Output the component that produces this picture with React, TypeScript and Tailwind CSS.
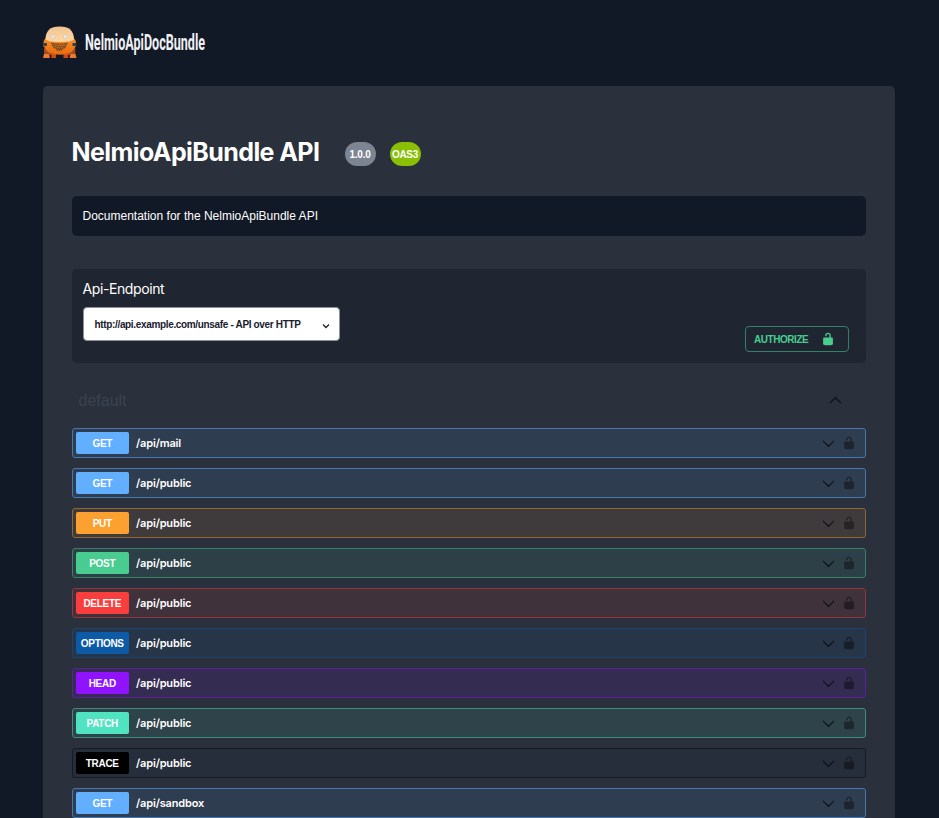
type Row = { method: string; path: string; box: string; badge: string };

const get = { box: 'bg-[#2f3d50] border-[#4577b0]', badge: 'bg-[#61affe]' };

const rows: Row[] = [
  { method: 'GET', path: '/api/mail', ...get },
  { method: 'GET', path: '/api/public', ...get },
  { method: 'PUT', path: '/api/public', box: 'bg-[#3f3b3d] border-[#936635]', badge: 'bg-[#fca130]' },
  { method: 'POST', path: '/api/public', box: 'bg-[#2d4047] border-[#398068]', badge: 'bg-[#49cc90]' },
  { method: 'DELETE', path: '/api/public', box: 'bg-[#3f323b] border-[#94363d]', badge: 'bg-[#f93e3e]' },
  { method: 'OPTIONS', path: '/api/public', box: 'bg-[#263548] border-[#1b4472]', badge: 'bg-[#0d5aa7]' },
  { method: 'HEAD', path: '/api/public', box: 'bg-[#352d51] border-[#5c1f9e]', badge: 'bg-[#9012fe]' },
  { method: 'PATCH', path: '/api/public', box: 'bg-[#2e434a] border-[#3d8d80]', badge: 'bg-[#50e3c2]' },
  { method: 'TRACE', path: '/api/public', box: 'bg-[#272e3b] border-[#171b23]', badge: 'bg-black' },
  { method: 'GET', path: '/api/sandbox', ...get },
];

function Lock({ className }: { className: string }) {
  return (
    <svg viewBox="0 0 20 20" fill="currentColor" className={className}>
      <path d="M15.8 8H14V5.6C14 2.703 12.665 1 10 1 7.334 1 6 2.703 6 5.6V6h2v-.801C8 3.754 8.797 3 10 3c1.203 0 2 .754 2 2.199V8H4c-.553 0-1 .646-1 1.199V17c0 .549.428 1.139.951 1.307l1.197.387C5.672 18.861 6.55 19 7.1 19h5.8c.549 0 1.428-.139 1.951-.307l1.196-.387c.524-.167.953-.757.953-1.306V9.199C17 8.646 16.352 8 15.8 8z" />
    </svg>
  );
}

function Arrow({ className }: { className: string }) {
  return (
    <svg viewBox="0 0 20 20" fill="currentColor" stroke="currentColor" strokeWidth=".4" className={className}>
      <path d="M17.418 6.109c.272-.268.709-.268.979 0s.271.701 0 .969l-7.908 7.83c-.27.268-.707.268-.979 0l-7.908-7.83c-.27-.268-.27-.701 0-.969.271-.268.709-.268.979 0L10 13.25l7.418-7.141z" />
    </svg>
  );
}

function Logo() {
  return (
    <svg width="300" height="44" viewBox="0 0 300 44" className="block">
      <defs>
        <linearGradient id="dome" x1="0" y1="0" x2="0" y2="1">
          <stop offset="0" stopColor="#efc491" />
          <stop offset="1" stopColor="#ffd7a2" />
        </linearGradient>
        <linearGradient id="body" x1="0" y1="0" x2="0" y2="1">
          <stop offset="0" stopColor="#f7922c" />
          <stop offset="1" stopColor="#e8690f" />
        </linearGradient>
      </defs>
      <path d="M3 12Q-.3 14 .3 20.500L4 23zM30.500 12Q33.800 14 33 20.500L29.500 23z" fill="#c47342" />
      <path d="M1 22.500Q3 20.500 6 24L9 27.500 8.500 29H1V27zM32.300 22.500Q30.300 20.500 27.300 24L24.300 27.500 24.800 29h7.500V27z" fill="#a8481c" />
      <path d="M8 28h5v4H8.500zM20.500 28h5l-.5 4h-4.500z" fill="#cf4918" />
      <path d="M1 28h5l1 4H0zM27.500 28h5l1 4h-7z" fill="#ec7b2d" />
      <path d="M1 16Q1.500 13 3.500 12.500H30Q32 13 32.500 16 33 22 28.500 26 24.500 28.800 17 28.800 9 28.800 5 26 .5 22 1 16z" fill="url(#body)" />
      <path d="M.3 17h3.500v3H.5zM29.500 17h3.500v3h-3.500z" fill="#353a46" />
      <path d="M2.500 13.500C2.500 5 7 .5 16.700.5S31 5 31 13.500Q28 16 16.700 16T2.500 13.500z" fill="url(#dome)" />
      <circle cx="10" cy="10.800" r="2" fill="#fffdf6" stroke="#c9c3b8" strokeWidth=".8" />
      <circle cx="22.400" cy="10.800" r="2" fill="#fffdf6" stroke="#c9c3b8" strokeWidth=".8" />
      <circle cx="10" cy="10.800" r=".6" fill="#a29a8e" />
      <circle cx="22.400" cy="10.800" r=".6" fill="#a29a8e" />
      <path d="M8 17.200Q16.500 19.300 25 17.200M9 19.200Q16.500 21.500 24 19.200M10.500 21.200Q16.500 23.500 22.500 21.200M13.500 23.500Q16.500 24.300 19.500 23.500" stroke="#744923" strokeWidth="1.600" strokeDasharray="1.700 .4" fill="none" />
      <text x="42" y="24.300" fontSize="22" fontWeight="700" fill="#f0f1f4" textLength="120" lengthAdjust="spacingAndGlyphs" className="font-['Roboto',sans-serif]">
        NelmioApiDocBundle
      </text>
    </svg>
  );
}

export default function App() {
  return (
    <div className="h-[818px] w-full overflow-hidden bg-[#111826] font-['Inter',sans-serif] text-white">
      <header className="h-[86px] pl-[43px] pt-[26px]">
        <Logo />
      </header>
      <main className="ml-[43px] h-[760px] w-[852px] rounded-[5px] bg-[#2a303c] pl-[28.5px] pr-[29px]">
        <div className="flex h-[110px] items-start pt-[49px]">
          <h1 className="w-[273px] whitespace-nowrap text-[25px] font-bold leading-[34px] tracking-[-0.58px]">NelmioApiBundle API</h1>
          <span className="mt-[7px] flex h-6 w-[31px] items-center justify-center rounded-full bg-[#7d8492] font-['Liberation_Sans',sans-serif] text-[10px] font-bold tracking-[-0.2px]">1.0.0</span>
          <span className="ml-[14px] mt-[7px] flex h-6 w-[31px] items-center justify-center rounded-full bg-[#89bf04] font-['Liberation_Sans',sans-serif] text-[10px] font-bold tracking-[-0.3px]">OAS3</span>
        </div>
        <div className="flex h-10 items-center rounded-[5px] bg-[#111826] pl-[11px] font-['Liberation_Sans',sans-serif] text-[12px]">
          <p>Documentation for the NelmioApiBundle API</p>
        </div>
        <section className="mt-[33px] flex h-[94px] justify-between rounded-[5px] bg-[#1f2631] pl-[11px] pr-[17px]">
          <div className="pt-[11px]">
            <label className="block text-[14px] leading-[18px] tracking-[-0.4px]">Api-Endpoint</label>
            <div className="ml-[0.5px] mt-[9px] flex h-[34px] w-[257px] items-center justify-between rounded-[4px] border border-[#8d929b] bg-white pl-[10.5px] pr-[8px] font-['Liberation_Sans',sans-serif] text-[10px] font-bold tracking-[-0.34px] text-[#18202e]">
              <span>http://api.example.com/unsafe - API over HTTP</span>
              <svg width="10" height="10" viewBox="0 0 10 10" className="mt-[3px]"><path d="M2 3.500l3 3 3-3" fill="none" stroke="#222" strokeWidth="1.300" /></svg>
            </div>
          </div>
          <button className="mt-[57px] flex h-[26px] w-[104px] items-center justify-between rounded-[4px] border border-[#338267] pl-2 pr-[13px] font-['Liberation_Sans',sans-serif] text-[10px] font-bold tracking-[-0.45px] text-[#49cc90]">
            <span>AUTHORIZE</span>
            <Lock className="size-[14px]" />
          </button>
        </section>
        <div className="flex h-[65px] items-center justify-between pl-[7px] pr-6 pt-[10px]">
          <h2 className="font-['Liberation_Sans',sans-serif] text-[16px] text-[#3b4350]">default</h2>
          <Arrow className="size-[13px] rotate-180 text-[#0b0e13]" />
        </div>
        <div className="flex flex-col gap-[10px]">
          {rows.map((r, i) => (
            <div key={i} className={`flex h-[30px] items-center rounded-[3px] border pl-[3px] pr-[9px] ${r.box}`}>
              <span className={`flex h-[22px] w-[53.5px] shrink-0 items-center justify-center rounded-[2px] font-['Liberation_Sans',sans-serif] text-[10px] font-bold tracking-[-0.3px] ${r.badge}`}>{r.method}</span>
              <span className="ml-[7px] flex-1 text-[11px] font-semibold tracking-[-0.15px]">{r.path}</span>
              <Arrow className="mr-[7px] size-[13px] text-[#0c1017]" />
              <Lock className="size-[14px] text-black opacity-40" />
            </div>
          ))}
        </div>
      </main>
    </div>
  );
}
